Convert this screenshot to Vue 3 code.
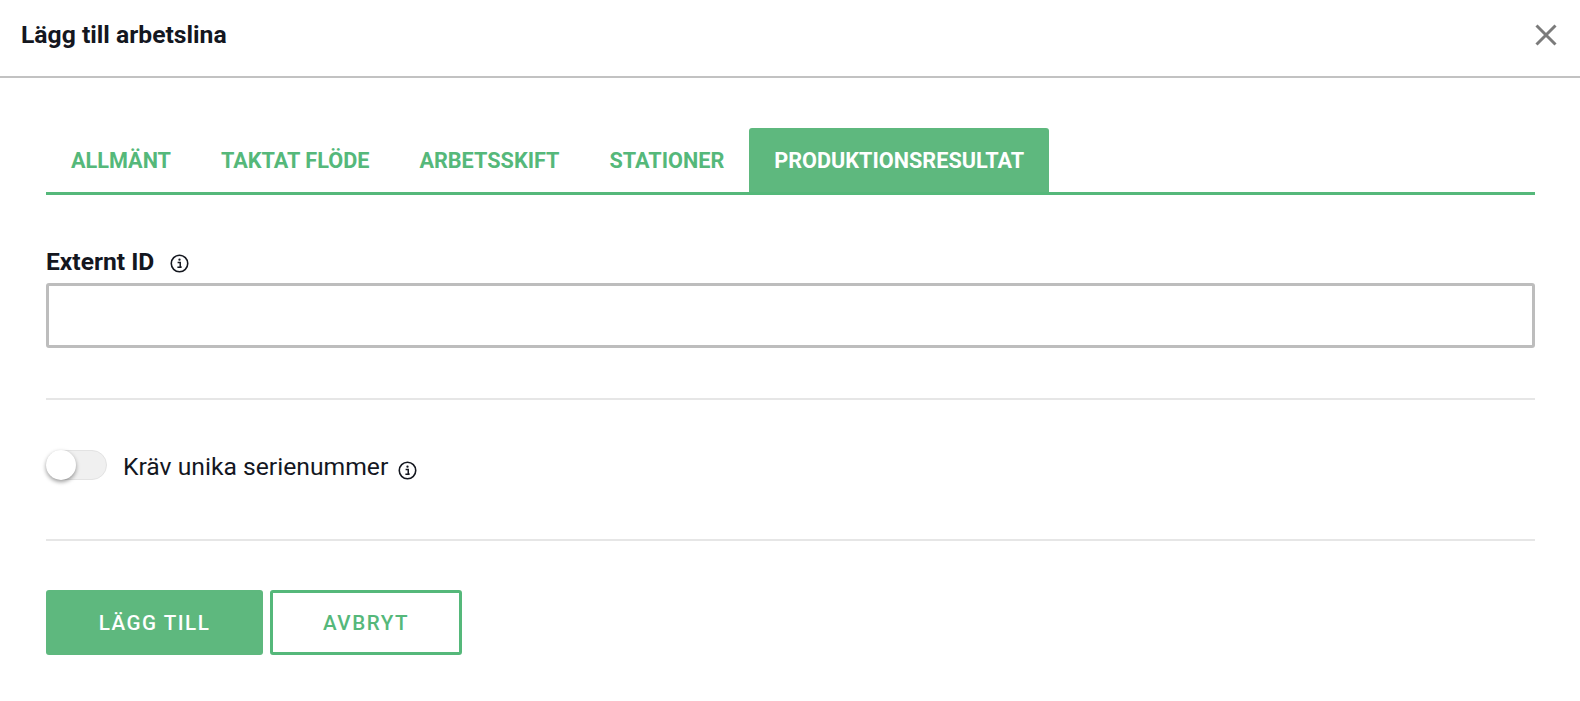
<template>
  <div class="dialog">
    <header class="dialog-header">
      <h1 class="dialog-title">Lägg till arbetslina</h1>
      <button class="close-btn" type="button" aria-label="Stäng">
        <svg width="24" height="24" viewBox="0 0 24 24">
          <path d="M2.5 2.5 L21.5 21.5 M21.5 2.5 L2.5 21.5" stroke="#7b7b7b" stroke-width="3" fill="none" />
        </svg>
      </button>
    </header>

    <main class="dialog-body">
      <nav class="tabs">
        <a
          v-for="tab in tabs"
          :key="tab"
          class="tab"
          :class="{ active: tab === activeTab }"
        >{{ tab }}</a>
      </nav>

      <section class="field">
        <label class="field-label">
          Externt ID
          <svg class="info-icon" width="19" height="19" viewBox="0 0 18 18">
            <circle cx="9" cy="9" r="7.8" stroke="#14171f" stroke-width="1.5" fill="none" />
            <circle cx="9" cy="5.4" r="1.1" fill="#14171f" />
            <path d="M7.2 8 H9.7 V12.3 H11 M7 12.6 H11" stroke="#14171f" stroke-width="1.4" fill="none" />
          </svg>
        </label>
        <input class="text-input" type="text" />
      </section>

      <section class="toggle-row">
        <span class="switch"><span class="knob"></span></span>
        <span class="toggle-label">Kräv unika serienummer</span>
        <svg class="info-icon-small" width="19" height="19" viewBox="0 0 18 18">
          <circle cx="9" cy="9" r="7.8" stroke="#14171f" stroke-width="1.5" fill="none" />
          <circle cx="9" cy="5.4" r="1.1" fill="#14171f" />
          <path d="M7.2 8 H9.7 V12.3 H11 M7 12.6 H11" stroke="#14171f" stroke-width="1.4" fill="none" />
        </svg>
      </section>

      <footer class="actions">
        <button class="btn btn-primary" type="button">LÄGG TILL</button>
        <button class="btn btn-outline" type="button">AVBRYT</button>
      </footer>
    </main>
  </div>
</template>

<script setup>
const tabs = ['ALLMÄNT', 'TAKTAT FLÖDE', 'ARBETSSKIFT', 'STATIONER', 'PRODUKTIONSRESULTAT'];
const activeTab = 'PRODUKTIONSRESULTAT';
</script>

<style>
html,
body {
  margin: 0;
  background: #fff;
}
</style>

<style scoped>
.dialog {
  width: 1580px;
  height: 701px;
  overflow: hidden;
  font-family: Roboto, "Liberation Sans", sans-serif;
  color: #14171f;
  background: #fff;
}

.dialog-header {
  height: 70px;
  box-sizing: content-box;
  border-bottom: 2px solid #c2c2c2;
  display: flex;
  align-items: center;
  justify-content: space-between;
  padding: 0 22px 6px 21px;
}

.dialog-title {
  margin: 0 0 2px;
  font-size: 24.7px;
  font-weight: 700;
}

.close-btn {
  border: 0;
  padding: 0;
  background: none;
  display: flex;
}

.dialog-body {
  padding: 50px 45px 0 46px;
}

.tabs {
  display: flex;
  height: 64px;
  border-bottom: 3px solid #55b87a;
}

.tab {
  padding: 0 25px;
  display: flex;
  align-items: center;
  font-size: 21.65px;
  font-weight: 700;
  color: #55b87a;
  border-radius: 3px 3px 0 0;
}

.tab.active {
  background: #5eb87e;
  color: #fff;
}

.field {
  padding: 52px 0 50px;
  border-bottom: 2px solid #e6e6e6;
}

.field-label {
  display: flex;
  align-items: center;
  gap: 16px;
  height: 28px;
  font-size: 24.6px;
  font-weight: 700;
  margin-bottom: 8px;
}

.info-icon {
  margin-top: 4px;
}

.text-input {
  display: block;
  width: 100%;
  height: 65px;
  box-sizing: border-box;
  border: 3px solid #bdbdbd;
  border-radius: 3px;
  outline: none;
}

.toggle-row {
  height: 141px;
  box-sizing: border-box;
  padding-top: 50px;
  display: flex;
  align-items: flex-start;
  border-bottom: 2px solid #e6e6e6;
}

.switch {
  width: 61px;
  height: 30px;
  box-sizing: border-box;
  border: 1px solid #e3e3e3;
  border-radius: 15px;
  background: #f0f0f0;
  position: relative;
  margin-right: 16px;
}

.knob {
  position: absolute;
  left: -1px;
  top: -1px;
  width: 30px;
  height: 30px;
  border-radius: 50%;
  background: #fff;
  box-shadow: 0 2px 4px rgba(0, 0, 0, 0.4);
}

.toggle-label {
  font-size: 24.7px;
  line-height: 34px;
  margin-right: 10px;
}

.info-icon-small {
  margin-top: 11px;
}

.actions {
  display: flex;
  gap: 7px;
  padding-top: 49px;
}

.btn {
  height: 65px;
  box-sizing: border-box;
  border-radius: 3px;
  font-family: inherit;
  font-size: 20.6px;
  font-weight: 500;
  letter-spacing: 1.5px;
}

.btn-primary {
  width: 217px;
  border: 0;
  background: #5eb87e;
  color: #fff;
}

.btn-outline {
  width: 192px;
  border: 3px solid #55b87a;
  background: #fff;
  color: #55b87a;
}
</style>
